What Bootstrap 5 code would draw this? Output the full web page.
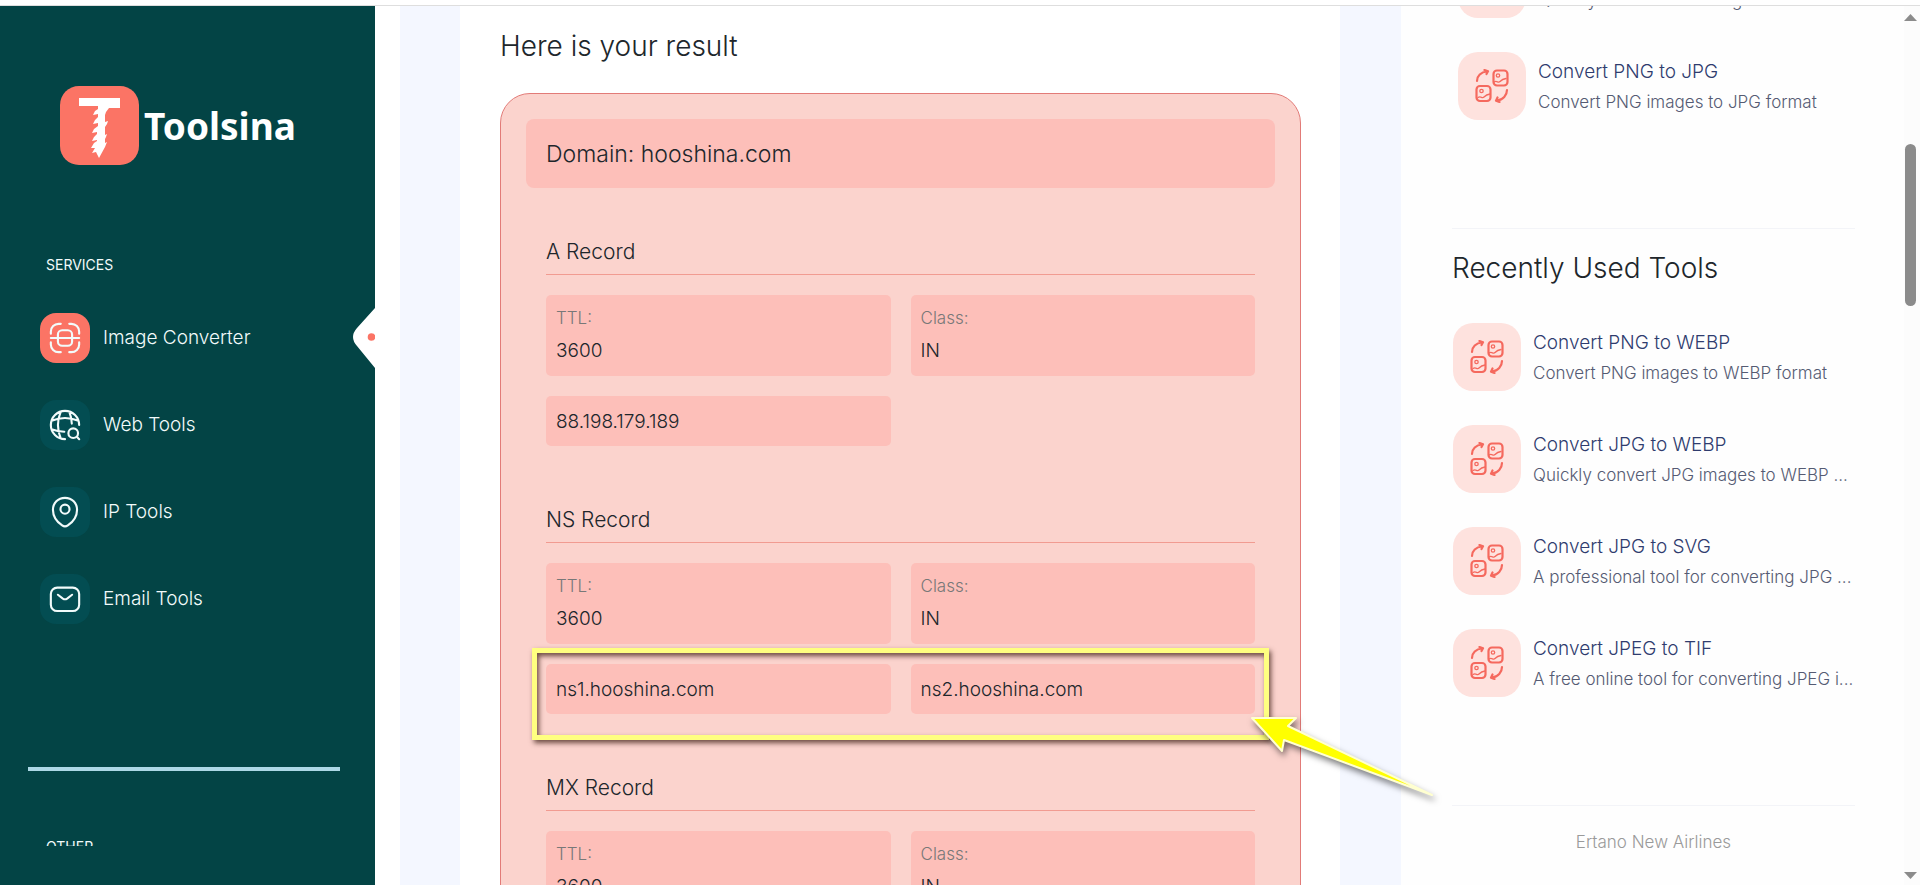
<!DOCTYPE html>
<html lang="en">
<head>
<meta charset="utf-8">
<meta name="viewport" content="width=device-width, initial-scale=1">
<title>Toolsina</title>
<link href="https://cdn.jsdelivr.net/npm/bootstrap@5.3.0/dist/css/bootstrap.min.css" rel="stylesheet">
<script src="https://cdn.jsdelivr.net/npm/bootstrap@5.3.0/dist/js/bootstrap.bundle.min.js"></script>
<style>
  body { font-family: Inter, "Liberation Sans", sans-serif; font-weight: 300; color: #20262b; background: #fff; }
  .app { border-top: 1px solid #dedede; margin-top: 5px; height: calc(100vh - 5px); }

  .sidebar { width: 375px; background: #034445; padding-bottom: 39px; }
  .sidebar, .sidebar a { color: #f2fbfb; }
  .brand { padding: 80px 60px 0; gap: 5px; }
  .brand-name { font: 700 37px/48px "Noto Sans", sans-serif; color: #fff; }
  .side-label { font-size: 14px; line-height: 20px; padding-left: 46px; font-weight: 400; }
  .services { margin-top: 90px; }
  .other { margin-top: 66px; }
  .side-link { height: 50px; padding-left: 40px; gap: 13px; font-size: 19px; text-decoration: none; }
  .side-nav { gap: 37px; margin: 38px 0 143px; }
  .side-icon { width: 50px; height: 50px; border-radius: 16px; background: #034d52; }
  .side-link.active .side-icon { background: #fb7465; }
  .side-icon svg { width: 34px; height: 34px; }
  .stroke { fill: none; stroke: currentColor; stroke-width: 1.5; stroke-linecap: round; stroke-linejoin: round; }
  .notch { top: -5px; right: 0; }
  .side-rule { height: 4px; background: #add8e6; margin: 0 35px 0 28px; }

  .content-bg { background: #f4f7ff; margin-left: 25px; padding: 0 61px 0 60px; z-index: 1; }
  .panel { background: #fff; padding: 20px 39px 0 40px; }
  .heading { font-size: 28px; line-height: 40px; font-weight: 300; }
  .result { margin-top: 27px; padding: 25px 25px 60px; background: #fbd3cd; border: 1px solid #e27b78; border-radius: 30px; }
  .domain { background: #fdbfb9; border-radius: 8px; padding: 2px 20px 0; font-size: 23px; line-height: 67px; }
  .record { padding: 0 20px; margin-bottom: 58px; }
  .record h3 { font-size: 21px; line-height: 30px; font-weight: 300; padding: 1px 0 7px; margin-bottom: 20px; border-bottom: 1px solid #f19b91; }
  .records { padding-top: 48px; }
  .cells { display: grid; grid-template-columns: 1fr 1fr; gap: 20px; margin: 0; }
  .cell { background: #fdbfb9; border-radius: 5px; padding: 8px 10px 7px; }
  .cell dt { font-size: 17px; line-height: 30px; font-weight: 300; color: #787878; }
  .cell dd { font-size: 19px; line-height: 36px; margin: 0; }
  .values { margin-top: 20px; }
  .value { background: #fdbfb9; border-radius: 5px; padding: 2px 10px 0; font-size: 19px; line-height: 48px; }
  .marker { inset: -16px -14px -26px; border: 5px solid #ffff80; box-shadow: 2px 3px 5px rgba(60,30,20,.75), inset 2px 3px 5px rgba(60,30,20,.75); }
  .arrow { left: calc(100% - 12px); top: 44px; filter: drop-shadow(2px 4px 3px rgba(0,0,0,.5)); }

  .tools { width: 503px; background: #fefefe; padding: 0 49px 0 51px; }
  .tool-list { display: grid; gap: 34px; padding-left: 1px; }
  .popular { margin-top: -56px; padding-left: 6px; }
  .tool { gap: 12px; text-decoration: none; height: 68px; }
  .tool-icon { width: 68px; height: 68px; border-radius: 20px; background: #fee2de; }
  .tool-copy { display: grid; padding-top: 2px; }
  .tool-title { font-size: 19px; line-height: 30px; color: #2f3c6e; }
  .tool-text { font-size: 17px; line-height: 30px; color: #555b73; }
  .rule { border-top: 1px solid #f3f4f8; }
  .recent { margin-top: 108px; padding-top: 19px; }
  .recent h2 { margin-bottom: 35px; }
  .credit { margin-top: 108px; padding-top: 21px; font-size: 17px; line-height: 30px; color: #9a9a9a; }
  .scroll { width: 16px; background: #fcfcfc; padding: 8px 3px 6px 0; }
  .thumb { width: 11px; height: 162px; margin-top: 123px; border-radius: 6px; background: #8b8b8b; }
</style>
</head>
<body class="overflow-hidden">
<svg class="d-none" aria-hidden="true">
  <symbol id="convert" viewBox="0 0 34 34">
    <g fill="none" stroke="#f5695e" stroke-width="2.200" stroke-linecap="round" stroke-linejoin="round">
      <rect x="18.500" y="1.500" width="14" height="15" rx="3.500"/><rect x="1.500" y="17" width="14" height="15" rx="3.500"/>
      <path d="M2 12C2 7 6 3 12 2.500M9.500 1 13 2.300 11.500 5"/><path d="M32 21c0 5-4 10-10 10.500M24.500 33 21 31.700 22.500 28.500"/>
      <g stroke-width="1.300"><circle cx="23" cy="6.500" r="1.700"/><path d="M19 13c3-2 4 1.500 6-.5s3-2.500 6-3"/><circle cx="6.500" cy="22" r="1.700"/><path d="M3 28.500c3-2 4 1.500 6-.5s3-2.500 6-3"/></g>
    </g>
  </symbol>
</svg>
<div class="app d-flex overflow-hidden">
  <aside class="sidebar flex-shrink-0">
    <div class="h-100 overflow-hidden">
      <a class="brand d-flex align-items-center text-decoration-none" href="#">
        <svg class="flex-shrink-0" width="79" height="79" viewBox="0 0 79 79" aria-hidden="true">
          <rect width="79" height="79" rx="19" fill="#fb7465"/>
          <path fill="#fff" d="M19 12h41v10H49l-3 4-1 3v7l3-1-1 3-2 3v8l2-1-1 3-1 2v4l2-1-2 5-6 11-3-6-4 1 3-5h-4l3-5 3-2v-1l-5 1 2-4 3-3v-2l-5 1 2-4 4-3v-3l-5 1 2-4 3-3v-3l-5 1 2-4 3-2v-3H19z"/>
        </svg>
        <span class="brand-name">Toolsina</span>
      </a>
      <div class="side-label services">SERVICES</div>
      <nav class="side-nav d-flex flex-column">
        <a class="side-link active d-flex align-items-center position-relative" href="#" aria-current="page">
          <span class="side-icon d-flex align-items-center justify-content-center"><svg class="stroke" viewBox="0 0 24 24"><path d="M9 2H7.500A5.500 5.500 0 0 0 2 7.500V9M15 2h1.500A5.500 5.500 0 0 1 22 7.500V9M9 22H7.500A5.500 5.500 0 0 1 2 16.500V15M15 22h1.500a5.500 5.500 0 0 0 5.500-5.500V15M2 12h20M7 12V9.500A3 3 0 0 1 10 6.500h4a3 3 0 0 1 3 3V12M7 12v2.500a3 3 0 0 0 3 3h4a3 3 0 0 0 3-3V12"/></svg></span>
          Image Converter
          <svg class="notch position-absolute" width="22" height="60" viewBox="0 0 22 60" aria-hidden="true"><path fill="#fff" d="M22 0v60L4 38Q-4 29 4 20z"/><circle cx="18.500" cy="29" r="3.800" fill="#fb7465"/></svg>
        </a>
        <a class="side-link d-flex align-items-center" href="#">
          <span class="side-icon d-flex align-items-center justify-content-center"><svg class="stroke" viewBox="0 0 24 24"><path d="M22 12a10 10 0 1 0-10 10M9 2.500c-2.500 6-2.500 13 0 19M15 2.500c1 2.500 1.700 5.500 1.800 8.500M2.500 9c6-2.500 13-2.500 19 0M2.500 15c3 1.200 6 1.700 9 1.800"/><circle cx="17.800" cy="17.800" r="3.400"/><path d="m20.500 20.500 1.500 1.500"/></svg></span>
          Web Tools
        </a>
        <a class="side-link d-flex align-items-center" href="#">
          <span class="side-icon d-flex align-items-center justify-content-center"><svg class="stroke" viewBox="0 0 24 24"><path d="M12 2c5 0 8.500 3.800 8.500 8.500 0 4.500-3 8.500-6.500 11a3.500 3.500 0 0 1-4 0c-3.500-2.500-6.500-6.500-6.500-11C3.500 5.800 7 2 12 2z"/><circle cx="12" cy="10" r="3.200"/></svg></span>
          IP Tools
        </a>
        <a class="side-link d-flex align-items-center" href="#">
          <span class="side-icon d-flex align-items-center justify-content-center"><svg class="stroke" viewBox="0 0 24 24"><rect x="2" y="4" width="20" height="16.500" rx="4.500"/><path d="m7 9 3.500 2.700q1.500 1 3 0L17 9"/></svg></span>
          Email Tools
        </a>
      </nav>
      <div class="side-rule"></div>
      <div class="side-label other">OTHER</div>
    </div>
  </aside>

  <main class="content-bg flex-grow-1 position-relative">
    <div class="panel">
      <h1 class="heading mb-0">Here is your result</h1>
      <section class="result">
        <div class="domain">Domain: hooshina.com</div>
        <div class="records">
          <section class="record">
            <h3>A Record</h3>
            <dl class="cells"><div class="cell"><dt>TTL:</dt><dd>3600</dd></div><div class="cell"><dt>Class:</dt><dd>IN</dd></div></dl>
            <div class="cells values"><div class="value">88.198.179.189</div></div>
          </section>
          <section class="record">
            <h3>NS Record</h3>
            <dl class="cells"><div class="cell"><dt>TTL:</dt><dd>3600</dd></div><div class="cell"><dt>Class:</dt><dd>IN</dd></div></dl>
            <div class="cells values position-relative">
              <div class="value">ns1.hooshina.com</div><div class="value">ns2.hooshina.com</div>
              <div class="marker position-absolute"></div>
              <svg class="arrow position-absolute" width="200" height="100" viewBox="0 0 200 100" aria-hidden="true"><path fill="#ff0" stroke="#ffffd0" stroke-width="2" stroke-linejoin="round" d="M9 10 53 10 45 18 189 87 41 32 39 43z"/></svg>
            </div>
          </section>
          <section class="record">
            <h3>MX Record</h3>
            <dl class="cells"><div class="cell"><dt>TTL:</dt><dd>3600</dd></div><div class="cell"><dt>Class:</dt><dd>IN</dd></div></dl>
          </section>
        </div>
      </section>
    </div>
  </main>

  <aside class="tools flex-shrink-0">
    <div class="popular tool-list">
      <a class="tool d-flex align-items-center" href="#"><span class="tool-icon d-flex flex-shrink-0 align-items-center justify-content-center"><svg width="34" height="34"><use href="#convert"/></svg></span><span class="tool-copy"><span class="tool-title">Convert JPG to PNG</span><span class="tool-text text-truncate">Quickly convert JPG images</span></span></a>
      <a class="tool d-flex align-items-center" href="#"><span class="tool-icon d-flex flex-shrink-0 align-items-center justify-content-center"><svg width="34" height="34"><use href="#convert"/></svg></span><span class="tool-copy"><span class="tool-title">Convert PNG to JPG</span><span class="tool-text text-truncate">Convert PNG images to JPG format</span></span></a>
    </div>
    <section class="recent rule">
      <h2 class="heading">Recently Used Tools</h2>
      <div class="tool-list">
        <a class="tool d-flex align-items-center" href="#"><span class="tool-icon d-flex flex-shrink-0 align-items-center justify-content-center"><svg width="34" height="34"><use href="#convert"/></svg></span><span class="tool-copy"><span class="tool-title">Convert PNG to WEBP</span><span class="tool-text text-truncate">Convert PNG images to WEBP format</span></span></a>
        <a class="tool d-flex align-items-center" href="#"><span class="tool-icon d-flex flex-shrink-0 align-items-center justify-content-center"><svg width="34" height="34"><use href="#convert"/></svg></span><span class="tool-copy"><span class="tool-title">Convert JPG to WEBP</span><span class="tool-text text-truncate">Quickly convert JPG images to WEBP ...</span></span></a>
        <a class="tool d-flex align-items-center" href="#"><span class="tool-icon d-flex flex-shrink-0 align-items-center justify-content-center"><svg width="34" height="34"><use href="#convert"/></svg></span><span class="tool-copy"><span class="tool-title">Convert JPG to SVG</span><span class="tool-text text-truncate">A professional tool for converting JPG ...</span></span></a>
        <a class="tool d-flex align-items-center" href="#"><span class="tool-icon d-flex flex-shrink-0 align-items-center justify-content-center"><svg width="34" height="34"><use href="#convert"/></svg></span><span class="tool-copy"><span class="tool-title">Convert JPEG to TIF</span><span class="tool-text text-truncate">A free online tool for converting JPEG i...</span></span></a>
      </div>
    </section>
    <footer class="credit rule text-center">Ertano New Airlines</footer>
  </aside>
  <div class="scroll d-flex flex-column align-items-center flex-shrink-0" aria-hidden="true">
    <svg width="13" height="7"><path d="M6.500 0l6.500 7H0z" fill="#8b8b8b"/></svg>
    <div class="thumb"></div>
    <svg class="mt-auto" width="13" height="7"><path d="M6.500 7l6.500-7H0z" fill="#8b8b8b"/></svg>
  </div>
</div>
</body>
</html>
